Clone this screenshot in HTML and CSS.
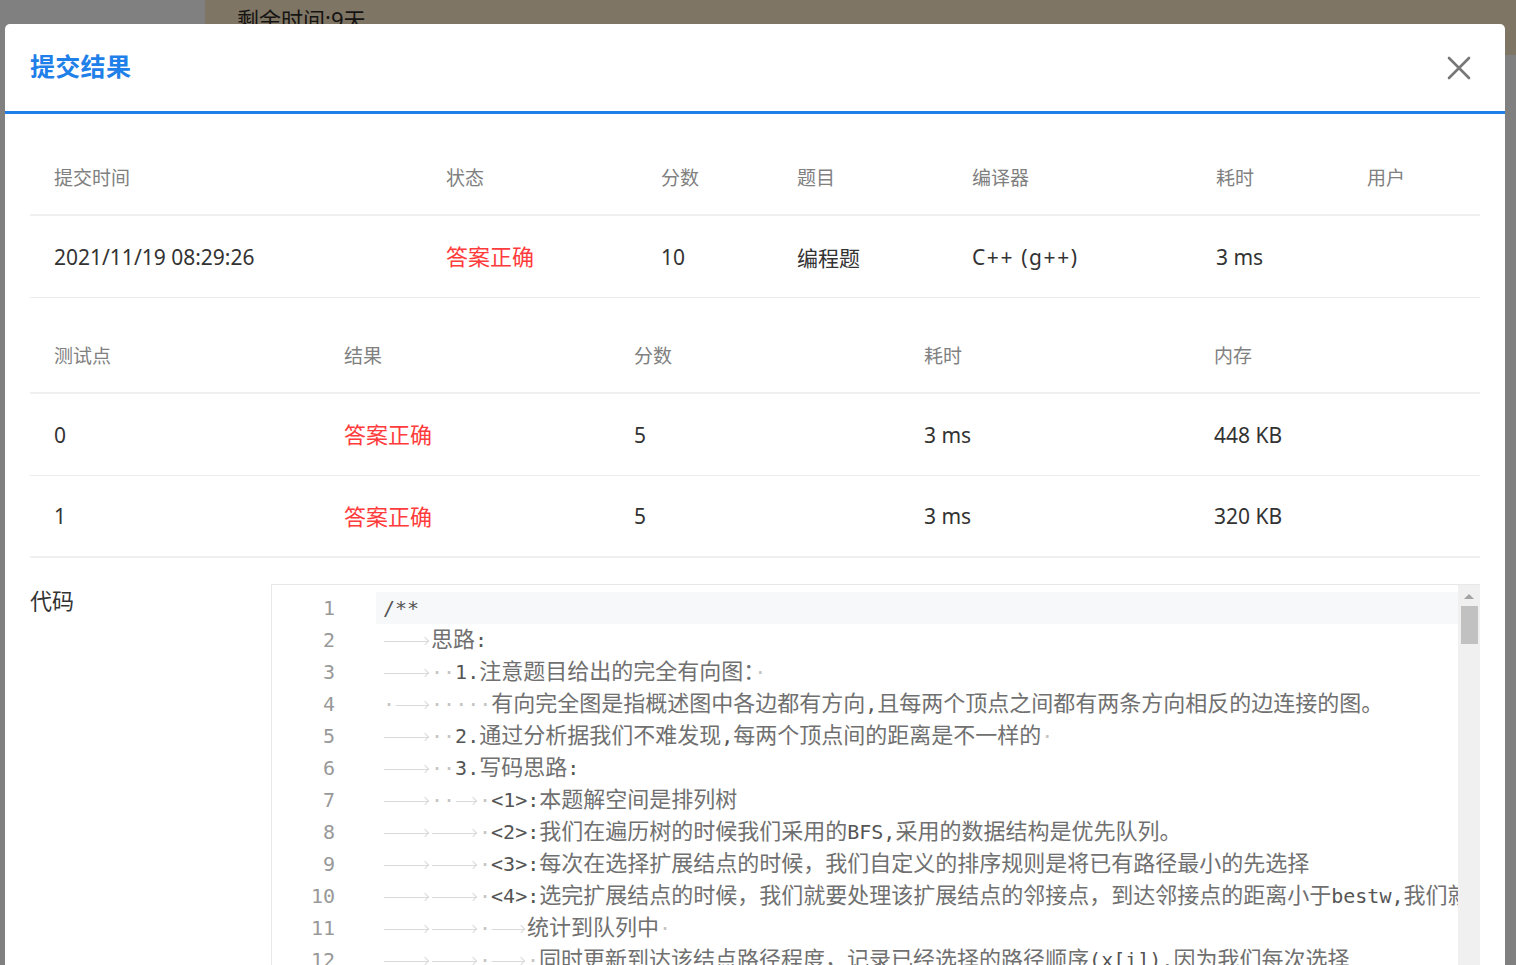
FILE: index.html
```html
<!DOCTYPE html>
<html lang="zh-CN">
<head>
<meta charset="utf-8">
<title>提交结果</title>
<link rel="stylesheet" href="styles.css">
</head>
<body>
<div class="page">
  <aside class="side"></aside>
  <div class="main">
    <div class="topbar"><span class="remain">剩余时间:9天</span></div>
  </div>
</div>

<div class="modal">
  <div class="modal-head">
    <h2 class="modal-title">提交结果</h2>
    <button class="close" aria-label="关闭">
      <svg width="24" height="24" viewBox="0 0 24 24"><path d="M2 2 L22 22 M22 2 L2 22" stroke="#777" stroke-width="2.6" stroke-linecap="round" fill="none"/></svg>
    </button>
  </div>

  <div class="modal-body">
    <div class="tbl sub">
      <div class="row head">
        <div class="cell">提交时间</div><div class="cell">状态</div><div class="cell">分数</div><div class="cell">题目</div><div class="cell">编译器</div><div class="cell">耗时</div><div class="cell">用户</div>
      </div>
      <div class="row">
        <div class="cell">2021/11/19 08:29:26</div><div class="cell ok">答案正确</div><div class="cell">10</div><div class="cell">编程题</div><div class="cell lang">C++ (g++)</div><div class="cell">3 ms</div><div class="cell"></div>
      </div>
    </div>

    <div class="tbl cases">
      <div class="row head">
        <div class="cell">测试点</div><div class="cell">结果</div><div class="cell">分数</div><div class="cell">耗时</div><div class="cell">内存</div>
      </div>
      <div class="row">
        <div class="cell">0</div><div class="cell ok">答案正确</div><div class="cell">5</div><div class="cell">3 ms</div><div class="cell">448 KB</div>
      </div>
      <div class="row">
        <div class="cell">1</div><div class="cell ok">答案正确</div><div class="cell">5</div><div class="cell">3 ms</div><div class="cell">320 KB</div>
      </div>
    </div>

    <div class="code-sec">
      <div class="code-label">代码</div>
      <div class="code-box">
        <div class="gutter">
          <div class="num">1</div><div class="num">2</div><div class="num">3</div><div class="num">4</div><div class="num">5</div><div class="num">6</div><div class="num">7</div><div class="num">8</div><div class="num">9</div><div class="num">10</div><div class="num">11</div><div class="num">12</div>
        </div>
        <div class="code">
<div class="ln cur">/**</div>
<div class="ln"><span class="t t4"></span><span class="z">思路</span>:</div>
<div class="ln"><span class="t t4"></span><span class="w">··</span>1.<span class="z">注意题目给出的完全有向图：</span><span class="w">·</span></div>
<div class="ln"><span class="w">·</span><span class="t t3"></span><span class="w">·····</span><span class="z">有向完全图是指概述图中各边都有方向</span>,<span class="z">且每两个顶点之间都有两条方向相反的边连接的图。</span></div>
<div class="ln"><span class="t t4"></span><span class="w">··</span>2.<span class="z">通过分析据我们不难发现</span>,<span class="z">每两个顶点间的距离是不一样的</span><span class="w">·</span></div>
<div class="ln"><span class="t t4"></span><span class="w">··</span>3.<span class="z">写码思路</span>:</div>
<div class="ln"><span class="t t4"></span><span class="w">··</span><span class="t t2"></span><span class="w">·</span>&lt;1&gt;:<span class="z">本题解空间是排列树</span></div>
<div class="ln"><span class="t t4"></span><span class="t t4"></span><span class="w">·</span>&lt;2&gt;:<span class="z">我们在遍历树的时候我们采用的</span>BFS,<span class="z">采用的数据结构是优先队列。</span></div>
<div class="ln"><span class="t t4"></span><span class="t t4"></span><span class="w">·</span>&lt;3&gt;:<span class="z">每次在选择扩展结点的时候，我们自定义的排序规则是将已有路径最小的先选择</span></div>
<div class="ln"><span class="t t4"></span><span class="t t4"></span><span class="w">·</span>&lt;4&gt;:<span class="z">选完扩展结点的时候，我们就要处理该扩展结点的邻接点，到达邻接点的距离小于</span>bestw,<span class="z">我们就将该结点加入队列</span></div>
<div class="ln"><span class="t t4"></span><span class="t t4"></span><span class="w">·</span><span class="t t3"></span><span class="z">统计到队列中</span><span class="w">·</span></div>
<div class="ln"><span class="t t4"></span><span class="t t4"></span><span class="w">·</span><span class="t t3"></span><span class="w">·</span><span class="z">同时更新到达该结点路径程度，记录已经选择的路径顺序</span>(x[i]),<span class="z">因为我们每次选择</span></div>
        </div>
        <div class="vscroll">
          <span class="arrow-up"></span>
          <span class="thumb"></span>
        </div>
      </div>
    </div>
  </div>
</div>
</body>
</html>
```

FILE: styles.css
```css
html, body {
  margin: 0;
  padding: 0;
}
body {
  width: 1516px;
  height: 965px;
  overflow: hidden;
  position: relative;
  font-family: "Noto Sans", "Noto Sans CJK SC", sans-serif;
  background: #808080;
}

/* dimmed page behind the dialog */
.page {
  display: grid;
  grid-template-columns: 205px 1fr;
  height: 965px;
}
.side {
  background: #808080;
}
.main {
  background: #808080;
}
.topbar {
  height: 55px;
  box-sizing: border-box;
  background: #7f7565;
  padding: 7px 0 0 32px;
}
.remain {
  font-size: 22px;
  line-height: 24px;
  color: #161412;
}

/* dialog */
.modal {
  position: absolute;
  left: 5px;
  top: 24px;
  width: 1500px;
  height: 1000px;
  background: #fff;
  border-radius: 5px 5px 0 0;
}
.modal-head {
  height: 87px;
  display: flex;
  align-items: center;
  justify-content: space-between;
  padding: 0 34px 0 25px;
  border-bottom: 3px solid #1f80e9;
}
.modal-title {
  margin: 0 0 4px 0;
  font-size: 25px;
  line-height: 1;
  font-weight: 700;
  color: #1f80e9;
  font-family: "Noto Sans CJK SC", sans-serif;
  letter-spacing: 0.3px;
}
.close {
  border: 0;
  background: transparent;
  padding: 0;
  width: 24px;
  height: 24px;
  display: flex;
}

.modal-body {
  padding: 26px 25px 0 25px;
}

/* tables */
.tbl .row {
  display: grid;
  align-items: center;
  height: 82px;
  box-sizing: border-box;
  border-bottom: 1px solid #ececec;
  font-size: 21px;
  color: #333;
}
.tbl .row.head {
  height: 76px;
  border-bottom: 2px solid #efefef;
  font-size: 19px;
  color: #808080;
}
.sub .row {
  grid-template-columns: 392px 215px 136px 175px 244px 151px 137px;
}
.cases {
  margin-top: 20px;
}
.cases .row {
  grid-template-columns: repeat(5, 1fr);
}
.cases .row:last-child {
  border-bottom: 2px solid #efefef;
}
.cell {
  padding-left: 24px;
  white-space: nowrap;
}
.cell.ok {
  color: #ff3b3b;
  font-size: 22px;
  padding-bottom: 3px;
}
.cell.lang {
  letter-spacing: 1.6px;
}

/* code */
.code-sec {
  display: flex;
  margin-top: 26px;
}
.code-label {
  width: 241px;
  flex: none;
  font-size: 22px;
  line-height: 32px;
  color: #333;
}
.code-box {
  flex: 1;
  display: flex;
  height: 420px;
  border: 1px solid #e8e8e8;
  border-right: 0;
  overflow: hidden;
}
.gutter {
  width: 104px;
  flex: none;
  box-sizing: border-box;
  padding: 7px 41px 0 0;
  text-align: right;
  font-family: "DejaVu Sans Mono", monospace;
  font-size: 20px;
  color: #999;
}
.num {
  height: 32px;
  line-height: 32px;
}
.code {
  flex: 1;
  min-width: 0;
  padding-top: 7px;
  font-family: "DejaVu Sans Mono", monospace;
  font-size: 20px;
  color: #555;
  overflow: hidden;
}
.ln {
  height: 32px;
  line-height: 32px;
  padding-left: 7px;
  white-space: pre;
}
.ln.cur {
  background: #f7f8fa;
}
.z {
  font-family: "Noto Sans CJK SC", sans-serif;
  font-size: 22px;
  line-height: 24px;
  color: #707070;
}
.w {
  color: #c4c4c4;
}
.t {
  display: inline-block;
  position: relative;
  height: 20px;
  vertical-align: -4px;
}
.t4 { width: 48px; }
.t3 { width: 36px; }
.t2 { width: 24px; }
.t::before {
  content: "";
  position: absolute;
  left: 1px;
  right: 3px;
  top: 10px;
  border-top: 1.5px solid #d9d9d9;
}
.t::after {
  content: "";
  position: absolute;
  right: 3px;
  top: 7px;
  width: 5px;
  height: 5px;
  border-top: 1.5px solid #d9d9d9;
  border-right: 1.5px solid #d9d9d9;
  transform: rotate(45deg);
  transform-origin: center;
}

.vscroll {
  width: 22px;
  flex: none;
  background: #f0f0f0;
  display: flex;
  flex-direction: column;
  align-items: center;
  padding-top: 9px;
  box-sizing: border-box;
}
.arrow-up {
  width: 0;
  height: 0;
  border-left: 5px solid transparent;
  border-right: 5px solid transparent;
  border-bottom: 5px solid #a3a3a3;
}
.thumb {
  margin-top: 7px;
  width: 17px;
  height: 38px;
  background: #c1c1c1;
}
```
